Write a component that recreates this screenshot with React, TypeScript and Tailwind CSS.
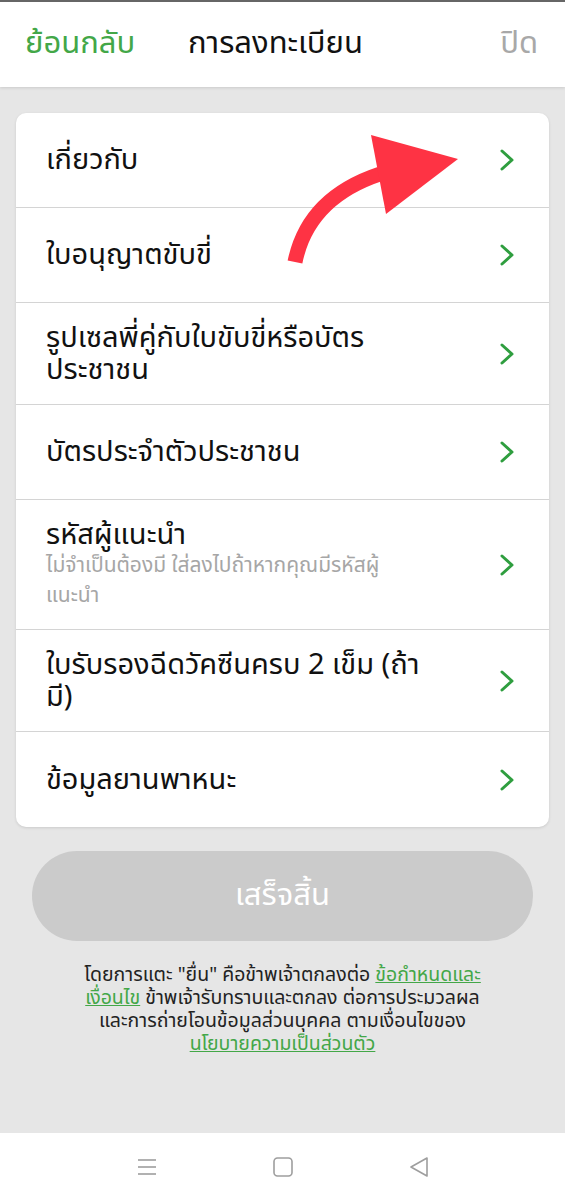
import React from "react";

const font = { fontFamily: '"Noto Sans Thai", "Noto Sans", "Liberation Sans", sans-serif' };

function Chevron() {
  return (
    <svg width="16" height="24" viewBox="0 0 16 24" fill="none" className="shrink-0">
      <polyline points="3,3 13,12 3,21" stroke="#2f9e3f" strokeWidth="3" strokeLinecap="round" strokeLinejoin="round" />
    </svg>
  );
}

type Item = { title: string[]; sub?: string[] };

const items: Item[] = [
  { title: ["เกี่ยวกับ"] },
  { title: ["ใบอนุญาตขับขี่"] },
  { title: ["รูปเซลพี่คู่กับใบขับขี่หรือบัตร", "ประชาชน"] },
  { title: ["บัตรประจำตัวประชาชน"] },
  { title: ["รหัสผู้แนะนำ"], sub: ["ไม่จำเป็นต้องมี ใส่ลงไปถ้าหากคุณมีรหัสผู้", "แนะนำ"] },
  { title: ["ใบรับรองฉีดวัคซีนครบ 2 เข็ม (ถ้า", "มี)"] },
  { title: ["ข้อมูลยานพาหนะ"] },
];

function Lines({ lines }: { lines: string[] }) {
  return (
    <>
      {lines.map((l, j) => (
        <React.Fragment key={j}>
          {j > 0 && <br />}
          {l}
        </React.Fragment>
      ))}
    </>
  );
}

export default function App() {
  return (
    <div className="w-[565px] h-[1200px] flex flex-col bg-[#e6e6e6] overflow-hidden" style={font}>
      <header className="h-[87px] shrink-0 bg-white border-t-2 border-[#666666] flex items-center px-[25px] shadow-[0_1px_3px_rgba(0,0,0,0.12)] relative z-10">
        <span className="text-[31px] text-[#43a748] w-[163px]">ย้อนกลับ</span>
        <span className="text-[31px] text-[#111111] flex-1">การลงทะเบียน</span>
        <span className="text-[31px] text-[#a8a8a8] mr-[2px]">ปิด</span>
      </header>

      <main className="flex-1 flex flex-col px-[16px] pt-[26px]">
        <div className="relative bg-white rounded-[10px] shadow-[0_1px_3px_rgba(0,0,0,0.12)]">
          {items.map((it, i) => (
            <div
              key={i}
              className={`flex items-center min-h-[95px] py-[18.5px] pl-[30px] pr-[34px] ${i < items.length - 1 ? "border-b border-[#d4d4d4]" : ""}`}
            >
              <div className="flex-1">
                <div className="text-[29px] leading-[32px] text-[#111111] whitespace-nowrap">
                  <Lines lines={it.title} />
                </div>
                {it.sub && (
                  <div className="text-[21px] leading-[30px] text-[#a6a6a6] whitespace-nowrap">
                    <Lines lines={it.sub} />
                  </div>
                )}
              </div>
              <Chevron />
            </div>
          ))}
          <svg className="absolute left-0 top-0 pointer-events-none" width="533" height="714" viewBox="16 113 533 714">
            <path d="M295 262 Q308 198 380 174" stroke="#fe3344" strokeWidth="15" fill="none" />
            <polygon points="371,135 458,159 386,214" fill="#fe3344" />
          </svg>
        </div>

        <button className="mt-[24px] mx-[16px] h-[90px] rounded-full bg-[#cbcbcb] text-white text-[31px]">
          เสร็จสิ้น
        </button>

        <p className="mt-[23px] text-center text-[19.5px] leading-[23px] text-[#222222] whitespace-nowrap">
          โดยการแตะ "ยื่น" คือข้าพเจ้าตกลงต่อ <span className="text-[#43a748] underline">ข้อกำหนดและ</span>
          <br />
          <span className="text-[#43a748] underline">เงื่อนไข</span> ข้าพเจ้ารับทราบและตกลง ต่อการประมวลผล
          <br />
          และการถ่ายโอนข้อมูลส่วนบุคคล ตามเงื่อนไขของ
          <br />
          <span className="text-[#43a748] underline">นโยบายความเป็นส่วนตัว</span>
        </p>
      </main>

      <nav className="h-[67px] shrink-0 bg-white flex items-center justify-center gap-[114px]">
        <svg width="22" height="22" viewBox="0 0 22 22" fill="none">
          <line x1="2" y1="4" x2="20" y2="4" stroke="#9e9e9e" strokeWidth="1.6" />
          <line x1="2" y1="11" x2="20" y2="11" stroke="#9e9e9e" strokeWidth="1.6" />
          <line x1="2" y1="18" x2="20" y2="18" stroke="#9e9e9e" strokeWidth="1.6" />
        </svg>
        <svg width="22" height="22" viewBox="0 0 22 22" fill="none">
          <rect x="2" y="2" width="18" height="18" rx="3.5" stroke="#9e9e9e" strokeWidth="1.6" />
        </svg>
        <svg width="22" height="22" viewBox="0 0 22 22" fill="none">
          <path d="M19 2 L3 11 L19 20 Z" stroke="#9e9e9e" strokeWidth="1.6" strokeLinejoin="round" />
        </svg>
      </nav>
    </div>
  );
}
